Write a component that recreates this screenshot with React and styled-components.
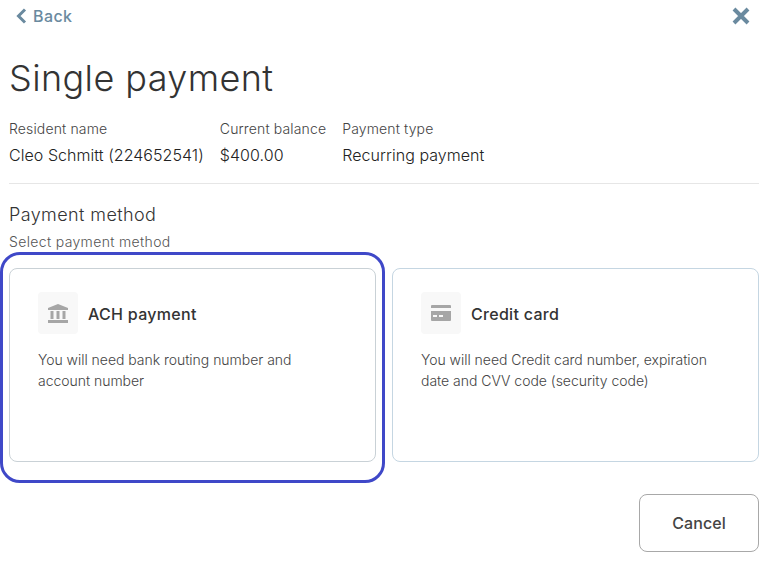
import React from "react";
import styled, { createGlobalStyle } from "styled-components";

const Global = createGlobalStyle`
  html, body { margin: 0; padding: 0; background: #fff; }
  body { font-family: "Inter", "Liberation Sans", sans-serif; overflow: hidden; }
  * { box-sizing: border-box; }
`;

const Page = styled.div`
  width: 776px;
  height: 563px;
  padding: 0 17px 0 9px;
  color: #333;
`;
const TopBar = styled.div`
  display: flex;
  align-items: center;
  justify-content: space-between;
  height: 33px;
  padding: 0 9px 1px 6px;
`;
const BackLink = styled.div`
  display: flex;
  align-items: center;
  gap: 6px;
  font-size: 16px;
  font-weight: 500;
  letter-spacing: 0.4px;
  color: #6a8a9f;
`;
const Heading = styled.h1`
  margin: 23px 0 0;
  font-size: 36px;
  line-height: 44px;
  font-weight: 300;
  letter-spacing: 0.4px;
  color: #333;
`;
const Summary = styled.div`
  display: flex;
  gap: 16px;
  margin-top: 20px;
  padding-bottom: 18px;
  border-bottom: 1px solid #e6e6e6;
`;
const Label = styled.div`
  font-size: 14px;
  line-height: 17px;
  font-weight: 300;
  letter-spacing: 0.14px;
  color: #444;
`;
const Value = styled.div`
  font-size: 16px;
  line-height: 20px;
  margin-top: 8px;
  letter-spacing: 0.05px;
  font-weight: 300;
  color: #222;
`;
const SectionTitle = styled.div`
  margin-top: 20px;
  font-size: 18px;
  line-height: 22px;
  font-weight: 300;
  letter-spacing: 0.4px;
`;
const Hint = styled.div`
  margin-top: 7px;
  font-size: 14px;
  line-height: 17px;
  font-weight: 300;
  letter-spacing: 0.35px;
  color: #555;
`;
const Cards = styled.div`
  display: grid;
  grid-template-columns: 367px 367px;
  gap: 16px;
  margin-top: 18px;
`;
const Card = styled.div`
  position: relative;
  height: 194px;
  padding: 23px 28px;
  border: 1px solid ${(p) => (p.$selected ? "#c9d1d6" : "#c5d6e2")};
  border-radius: 8px;
  &::after {
    content: ${(p) => (p.$selected ? '""' : "none")};
    position: absolute;
    inset: -17px -10px -22px -10px;
    border: 3px solid #3f48c8;
    border-radius: 20px;
  }
`;
const CardHead = styled.div`
  display: flex;
  align-items: center;
  gap: 10px;
`;
const IconTile = styled.div`
  width: 40px;
  height: 42px;
  display: flex;
  align-items: center;
  justify-content: center;
  background: #f8f8f8;
  border-radius: 4px;
`;
const CardTitle = styled.div`
  padding-top: 2px;
  font-size: 16px;
  font-weight: 500;
  letter-spacing: 0.3px;
  color: #333;
`;
const CardText = styled.div`
  max-width: 295px;
  margin-top: 15px;
  font-size: 14px;
  line-height: 21px;
  font-weight: 300;
  letter-spacing: -0.03px;
  color: #444;
`;
const Footer = styled.div`
  display: flex;
  justify-content: flex-end;
  margin-top: 32px;
`;
const CancelButton = styled.button`
  width: 120px;
  height: 58px;
  background: #fff;
  border: 1px solid #a8a8a8;
  border-radius: 8px;
  font-family: inherit;
  font-size: 16px;
  font-weight: 500;
  letter-spacing: 0.1px;
  color: #444;
`;

const BankIcon = () => (
  <svg width="20" height="19" viewBox="0 0 20 19" fill="#a6a6a6">
    <path d="M10 0 L20 4 V6 H0 V4 Z" />
    <rect x="2.5" y="7" width="3" height="8" />
    <rect x="8.5" y="7" width="3" height="8" />
    <rect x="14.5" y="7" width="3" height="8" />
    <rect x="0" y="16" width="20" height="3" />
  </svg>
);

const CardIcon = () => (
  <svg width="20" height="16" viewBox="0 0 20 16" fill="#a6a6a6">
    <path d="M1 0 H19 A1 1 0 0 1 20 1 V3 H0 V1 A1 1 0 0 1 1 0 Z" />
    <path
      d="M0 6 H20 V15 A1 1 0 0 1 19 16 H1 A1 1 0 0 1 0 15 Z M2 10 V12 H6 V10 Z M8 10 V12 H12 V10 Z"
      fillRule="evenodd"
    />
  </svg>
);

export default function App() {
  return (
    <Page>
      <Global />
      <TopBar>
        <BackLink>
          <svg width="12" height="16" viewBox="0 0 12 16" fill="none" stroke="#6a8a9f" strokeWidth="3">
            <path d="M10 1.5 L3.5 8 L10 14.5" />
          </svg>
          Back
        </BackLink>
        <svg width="18" height="18" viewBox="0 0 18 18" stroke="#6a8a9f" strokeWidth="4">
          <path d="M2 2 L16 16 M16 2 L2 16" />
        </svg>
      </TopBar>
      <Heading>Single payment</Heading>
      <Summary>
        <div>
          <Label>Resident name</Label>
          <Value>Cleo Schmitt (224652541)</Value>
        </div>
        <div>
          <Label>Current balance</Label>
          <Value>$400.00</Value>
        </div>
        <div>
          <Label>Payment type</Label>
          <Value>Recurring payment</Value>
        </div>
      </Summary>
      <SectionTitle>Payment method</SectionTitle>
      <Hint>Select payment method</Hint>
      <Cards>
        <Card $selected>
          <CardHead>
            <IconTile><BankIcon /></IconTile>
            <CardTitle>ACH payment</CardTitle>
          </CardHead>
          <CardText>You will need bank routing number and account number</CardText>
        </Card>
        <Card>
          <CardHead>
            <IconTile><CardIcon /></IconTile>
            <CardTitle>Credit card</CardTitle>
          </CardHead>
          <CardText>You will need Credit card number, expiration date and CVV code (security code)</CardText>
        </Card>
      </Cards>
      <Footer>
        <CancelButton>Cancel</CancelButton>
      </Footer>
    </Page>
  );
}
